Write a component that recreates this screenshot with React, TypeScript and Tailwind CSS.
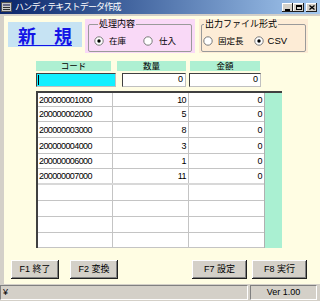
import React from "react";

const F = "font-['Liberation_Sans','Noto_Sans_CJK_JP',sans-serif]";

const rows = [
  ["200000001000", "10", "0"],
  ["200000002000", "5", "0"],
  ["200000003000", "8", "0"],
  ["200000004000", "3", "0"],
  ["200000006000", "1", "0"],
  ["200000007000", "11", "0"],
  ["", "", ""],
  ["", "", ""],
  ["", "", ""],
  ["", "", ""],
];

// row pitch in the grid is not even (about 15.7px)
const heights = [14, 15, 16, 16, 15, 16, 16, 16, 16, 15];

function Radio({ checked }: { checked?: boolean }) {
  return (
    <svg width="10" height="10" viewBox="0 0 10 10" className="shrink-0">
      <circle cx="5" cy="5" r="4.2" fill="#ffffff" stroke="#7a7a7a" />
      {checked && <circle cx="5" cy="5" r="1.7" fill="#000000" />}
    </svg>
  );
}

function Btn({ label, className }: { label: string; className: string }) {
  return (
    <div
      className={
        "h-[19px] bg-[#d4d0c8] flex items-center justify-center text-[9px] text-black shadow-[inset_-1px_-1px_0_#202020,inset_1px_1px_0_#ffffff,inset_-2px_-2px_0_#808080] " +
        className
      }
    >
      {label}
    </div>
  );
}

export default function App() {
  return (
    <div className={"w-[320px] h-[301px] bg-[#d4d0c8] flex flex-col overflow-hidden " + F}>
      {/* title bar */}
      <div className="h-[14px] flex items-center bg-gradient-to-r from-[#0a246a] to-[#a6caf0]">
        <svg width="11" height="10" viewBox="0 0 11 10" className="ml-[1px]">
          <rect x="0.5" y="0.5" width="10" height="9" fill="#c8c8c8" stroke="#505050" />
          <rect x="2" y="2" width="7" height="2" fill="#6a6a8a" />
          <rect x="2" y="5" width="7" height="1" fill="#303030" />
          <rect x="2" y="7" width="7" height="1" fill="#303030" />
        </svg>
        <span className="ml-[3px] text-[9px] leading-[10px] text-white tracking-[-0.8px]">
          ハンディテキストデータ作成
        </span>
        <div className="ml-auto mr-[3px] flex items-center">
          <div className="w-[11px] h-[9px] bg-[#d4d0c8] flex items-end justify-center pb-[1px] shadow-[inset_-1px_-1px_0_#202020,inset_1px_1px_0_#ffffff]">
            <div className="w-[5px] h-[2px] bg-black" />
          </div>
          <div className="w-[11px] h-[9px] bg-[#d4d0c8] flex items-center justify-center shadow-[inset_-1px_-1px_0_#202020,inset_1px_1px_0_#ffffff]">
            <div className="w-[6px] h-[5px] border border-black border-t-2" />
          </div>
          <div className="ml-[2px] w-[11px] h-[9px] bg-[#d4d0c8] flex items-center justify-center shadow-[inset_-1px_-1px_0_#202020,inset_1px_1px_0_#ffffff]">
            <svg width="6" height="5" viewBox="0 0 6 5">
              <path d="M0.5 0.5 L5.5 4.5 M5.5 0.5 L0.5 4.5" stroke="#000" strokeWidth="1.3" />
            </svg>
          </div>
        </div>
      </div>

      {/* client */}
      <div className="mt-[2px] ml-[4px] h-[268px] bg-[#fffde3] flex flex-col">
        <div className="flex items-start">
          <div className="ml-[4px] mt-[6px] w-[74px] h-[25px] bg-[#c6e3f3] flex items-center justify-center">
            <span className="text-[18px] leading-[20px] font-bold text-[#1414e6] underline underline-offset-[2px] font-['Noto_Sans_CJK_JP',sans-serif]">
              新　規
            </span>
          </div>

          <div className="ml-[3px] mt-[3px] w-[110px] h-[34px] bg-[#f9d9f7] px-[3px]">
            <fieldset className="h-[33px] border border-[#9a9a9a] rounded-[2px] pl-[5px]">
              <legend className="ml-[4px] px-[1px] text-[9px] leading-[10px] text-black">処理内容</legend>
              <div className="mt-[6px] h-[12px] flex items-center text-[8.5px] text-black">
                <Radio checked />
                <span className="ml-[5px]">在庫</span>
                <span className="ml-[17px]">
                  <Radio />
                </span>
                <span className="ml-[6px]">仕入</span>
              </div>
            </fieldset>
          </div>

          <div className="ml-[4px] mt-[3px] w-[109px] h-[34px] bg-[#fdecd6] px-[2px]">
            <fieldset className="h-[33px] border border-[#9a9a9a] rounded-[2px] pl-[1px]">
              <legend className="ml-[1px] px-[1px] text-[9px] leading-[10px] text-black">出力ファイル形式</legend>
              <div className="mt-[6px] h-[12px] flex items-center text-[8.5px] text-black">
                <Radio />
                <span className="ml-[5px]">固定長</span>
                <span className="ml-[10px]">
                  <Radio checked />
                </span>
                <span className="ml-[4px] text-[9.5px]">CSV</span>
              </div>
            </fieldset>
          </div>
        </div>

        {/* headers */}
        <div className="mt-[8px] h-[10px] flex text-[8.5px] leading-[10px] text-black">
          <div className="ml-[32px] w-[75px] bg-[#aef0d2] text-center">コード</div>
          <div className="ml-[6px] w-[69px] bg-[#aef0d2] text-center">数量</div>
          <div className="ml-[4px] w-[70px] bg-[#aef0d2] text-center">金額</div>
        </div>

        {/* inputs */}
        <div className="mt-[2px] h-[14px] flex text-[9px] text-black">
          <div className="ml-[32px] w-[80px] bg-[#13f0ff] border border-t-[#404040] border-l-[#404040] border-b-[#c0c0c0] border-r-[#c0c0c0] flex items-center">
            <div className="ml-[1px] w-[1px] h-[10px] bg-black" />
          </div>
          <div className="ml-[6px] w-[64px] bg-white border border-t-[#404040] border-l-[#404040] border-b-[#c0c0c0] border-r-[#c0c0c0] flex items-center justify-end pr-[2px]">
            0
          </div>
          <div className="ml-[3px] w-[72px] bg-white border border-t-[#404040] border-l-[#404040] border-b-[#c0c0c0] border-r-[#c0c0c0] flex items-center justify-end pr-[2px]">
            0
          </div>
        </div>

        {/* grid */}
        <div className="mt-[4px] ml-[32px] w-[246px] h-[157px] flex border-l-2 border-t-2 border-l-[#404040] border-t-[#404040] overflow-hidden">
          <div className="w-[226px] bg-white flex flex-col">
            {rows.map((r, i) => (
              <div
                key={i}
                style={{ height: heights[i] }}
                className={
                  "flex text-[9px] leading-[10px] tracking-[-0.6px] text-black " +
                  (i === 5 ? "border-b-2 border-b-[#d8d8d8]" : "border-b border-b-[#c4c4c4]")
                }
              >
                <div className="w-[75px] border-r border-r-[#c4c4c4] pl-[1px] flex items-center">{r[0]}</div>
                <div className="w-[76px] border-r border-r-[#c4c4c4] pr-[2px] flex items-center justify-end">{r[1]}</div>
                <div className="w-[75px] pr-[2px] flex items-center justify-end">{r[2]}</div>
              </div>
            ))}
          </div>
          <div className="w-[18px] bg-[#aaf0d2] border-l border-l-[#b0b0b0]" />
        </div>

        {/* function buttons */}
        <div className="mt-[12px] flex">
          <Btn label="F1 終了" className="ml-[7px] w-[48px]" />
          <Btn label="F2 変換" className="ml-[11px] w-[48px]" />
          <Btn label="F7 設定" className="ml-[74px] w-[55px]" />
          <Btn label="F8 実行" className="ml-[5px] w-[55px]" />
        </div>
      </div>

      {/* status bar */}
      <div className="h-[17px] flex items-center text-[9px] text-black">
        <div className="w-[248px] h-[15px] border border-t-[#808080] border-l-[#808080] border-b-white border-r-white flex items-center pl-[2px]">
          ¥
        </div>
        <div className="ml-[2px] w-[67px] h-[15px] border border-t-[#808080] border-l-[#808080] border-b-white border-r-white flex items-center justify-center">
          Ver 1.00
        </div>
      </div>
    </div>
  );
}
